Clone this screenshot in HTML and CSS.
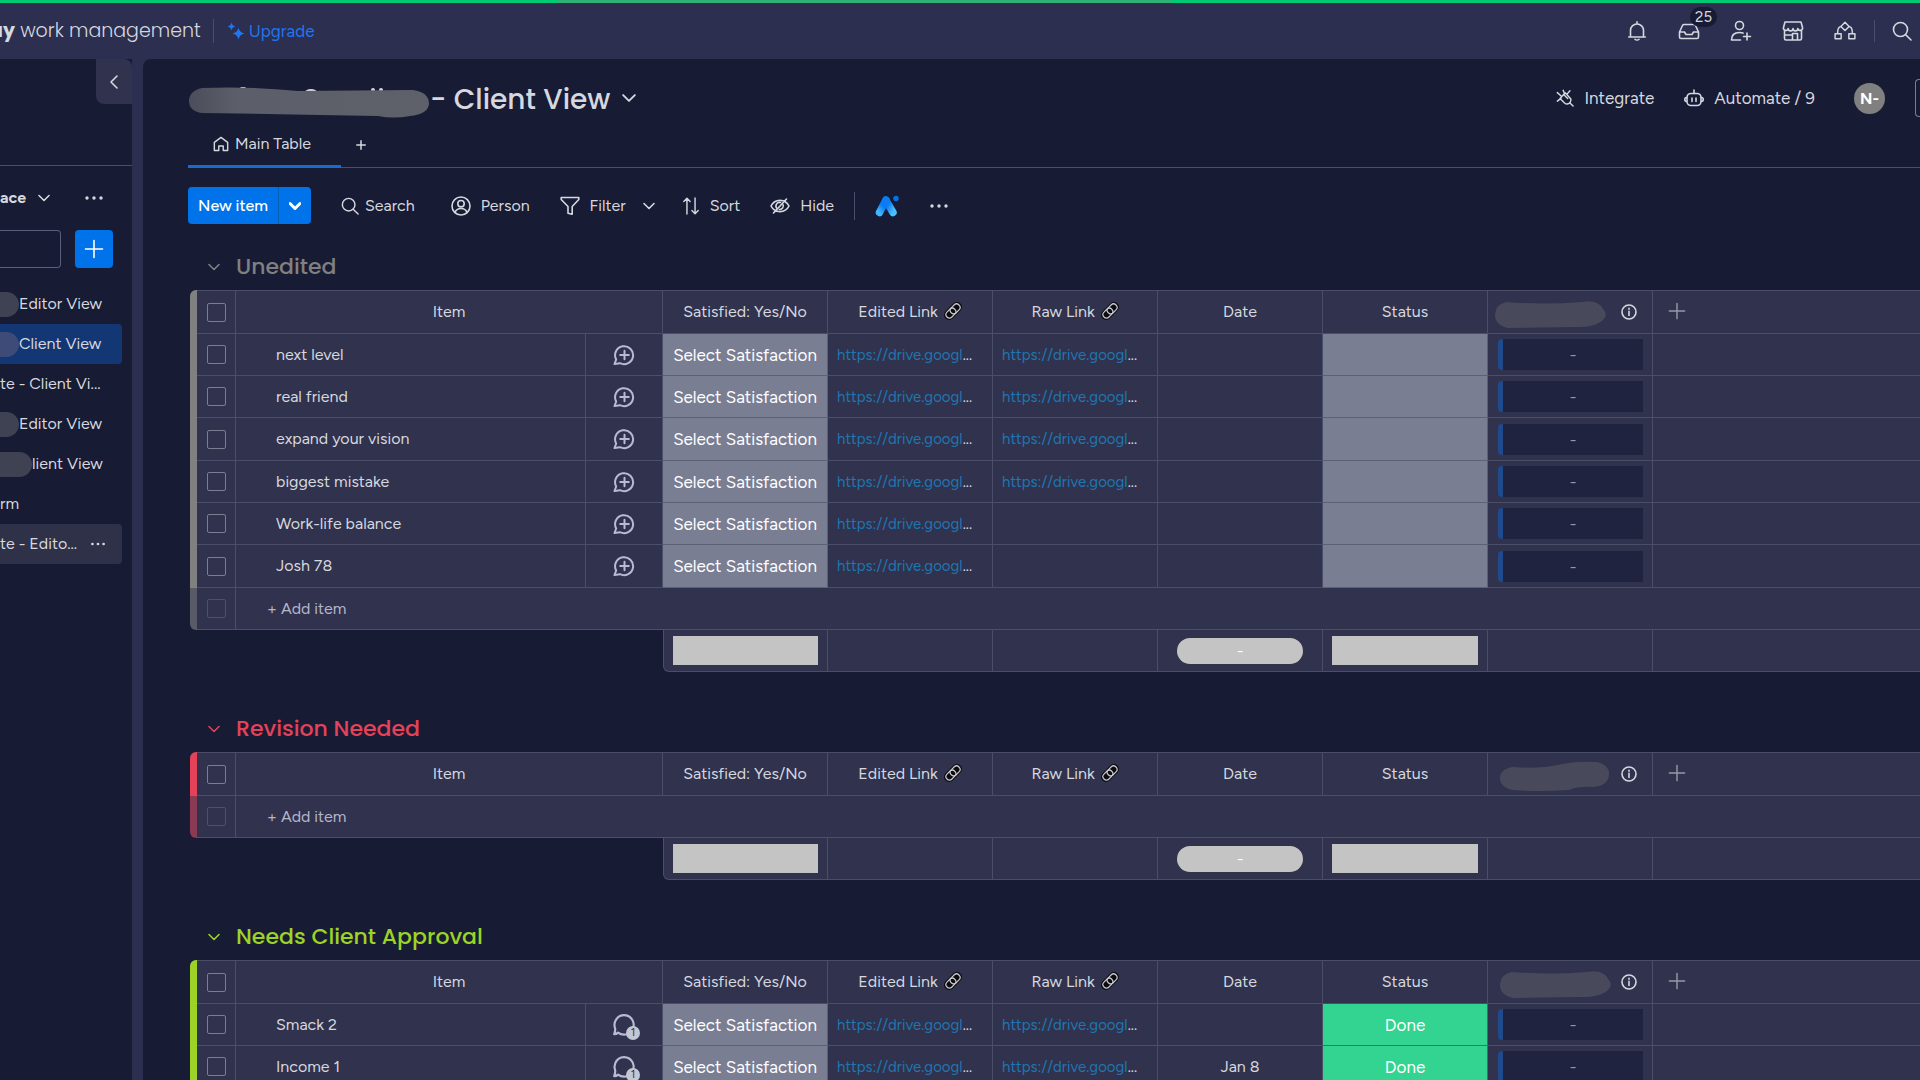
FILE: index.html
```html
<!DOCTYPE html>
<html lang="en">
  <head>
    <meta charset="UTF-8" />
    <meta name="viewport" content="width=device-width, initial-scale=1.0" />
    <title>Client View</title>
    <link rel="stylesheet" href="styles.css">
  </head>
  <body>
    <!-- icon sprite -->
    <svg class="sprite" aria-hidden="true">
      <defs>
        <linearGradient id="aiLeft" x1="0" y1="1" x2="0.6" y2="0">
          <stop offset="0" stop-color="#3fb6ff" />
          <stop offset="0.6" stop-color="#0a7cf5" />
        </linearGradient>
        <linearGradient id="aiRight" x1="1" y1="1" x2="0" y2="0">
          <stop offset="0" stop-color="#4cc0ff" />
          <stop offset="0.8" stop-color="#0073ea" />
        </linearGradient>
        <linearGradient id="smudge" x1="0" y1="0" x2="1" y2="0">
          <stop offset="0" stop-color="#4b4d5a" />
          <stop offset="0.2" stop-color="#5c5e69" />
          <stop offset="1" stop-color="#5e606a" />
        </linearGradient>
      </defs>
      <symbol id="chevron" viewBox="0 0 12 12"><path d="M1 3.5l5 5 5-5" /></symbol>
      <symbol id="chevron-left" viewBox="0 0 12 16"><path d="M9 2L3 8l6 6" /></symbol>
      <symbol id="plus" viewBox="0 0 20 20"><path d="M10 1.500v17M1.500 10h17" /></symbol>
      <symbol id="dots" viewBox="0 0 20 20"><g fill="currentColor" stroke="none"><circle cx="3" cy="10" r="1.700" /><circle cx="10" cy="10" r="1.700" /><circle cx="17" cy="10" r="1.700" /></g></symbol>
      <symbol id="search" viewBox="0 0 20 20"><circle cx="8.500" cy="8.500" r="7" /><path d="M13.500 13.500L19 19" /></symbol>
      <symbol id="home" viewBox="0 0 18 18"><path d="M1.500 16.300V7.200L9 1.600l7.500 5.600v9.100h-5v-5h-5v5z" /></symbol>
      <symbol id="person" viewBox="0 0 20 20"><circle cx="10" cy="10" r="9" /><circle cx="10" cy="7.700" r="3.200" /><path d="M4 16.500c1-3 3.500-4 6-4s5 1 6 4" /></symbol>
      <symbol id="filter" viewBox="0 0 20 20"><path d="M1.200 1.500h17.600v2L12.200 10.500v7.800L8 17.200V10.500L1.200 3.500z" /></symbol>
      <symbol id="sort" viewBox="0 0 18 20"><path d="M4.500 19V1.500M1 5l3.500-3.500L8 5M13.500 1v17.500M10 15l3.500 3.500L17 15" /></symbol>
      <symbol id="hide" viewBox="0 0 20 18"><path d="M1 9c2-4 5.500-5.600 9-5.600S17 5 19 9c-2 4-5.500 5.600-9 5.600S3 13 1 9zM3.500 16L16.500 2" /><path d="M7 11.500a3.600 3.600 0 0 1 3.500-6M13 7.500a3.600 3.600 0 0 1-3.600 5" /></symbol>
      <symbol id="ai" viewBox="0 0 24 22"><path d="M11 5.500l7 12" stroke="url(#aiRight)" stroke-width="7.500" /><path d="M11 5l-6.500 12.500" stroke="url(#aiLeft)" stroke-width="7.500" /><circle cx="21" cy="3.500" r="2.700" fill="#0073ea" stroke="none" /></symbol>
      <symbol id="bell" viewBox="0 0 22 22"><path d="M4.500 16.500V10.500a6.500 6.500 0 0 1 13 0v6M2.700 17h16.600M9 19.300c1 1 3 1 4 0M11 4V1.800" /></symbol>
      <symbol id="inbox" viewBox="0 0 22 22"><path d="M1.500 12L4.500 5.500q.5-1 1.500-1h10q1 0 1.500 1L20.500 12v5q0 1.500-1.500 1.500H3q-1.500 0-1.500-1.500zM1.500 12h5l1.500 2.500h6L15.500 12h5" /></symbol>
      <symbol id="invite" viewBox="0 0 22 22"><circle cx="9.500" cy="5.500" r="4" /><path d="M10.500 20H1.500c0-5 3-7.500 8-7.500 1.500 0 2.500.2 3.500.6M17 13v7M13.500 16.500h7" /></symbol>
      <symbol id="store" viewBox="0 0 22 22"><path d="M2.500 10.500v8q0 1.500 1.500 1.500h14q1.500 0 1.500-1.500v-8M3 2h16l1.500 5.500a2.400 2.400 0 0 1-4.700 1 2.400 2.400 0 0 1-4.800 0 2.400 2.400 0 0 1-4.800 0 2.400 2.400 0 0 1-4.700-1zM3 15h7.500M10.500 20v-6.500h5V20" /></symbol>
      <symbol id="flow" viewBox="0 0 24 22"><path d="M12 1.500l4.500 4.500-4.500 4.500L7.500 6zM7.500 6Q4 6.500 4 13M16.500 6Q20 6.500 20 13M1.200 14h6.600v5.500H1.200zM16.200 14h6.600v5.500h-6.600z" /></symbol>
      <symbol id="sparkles" viewBox="0 0 18 18"><g fill="currentColor" stroke="none"><path d="M4.500 0.500Q5.200 4 8.500 4.600 5.200 5.300 4.500 8.500 3.800 5.300.5 4.600 3.800 4 4.500.5z" /><path d="M11.500 5.500Q12.500 10.600 17.500 11.500 12.500 12.500 11.500 17.500 10.500 12.500 5.500 11.500 10.500 10.600 11.500 5.500z" /></g></symbol>
      <symbol id="plug" viewBox="0 0 20 20"><path d="M10.500 4.500L16.500 11Q17 14 14.500 16 12 17.500 9.500 15.500L4.500 10.500M8.500 6L13 10.500M8.500 6L4.500 10.500M1.500 13.500L5.500 10.500M10.500 4.500L8.500 6M12 6L15.500 2M9.500 5L8 1.500M6 8L1.500 4M15.500 15.500L19 19" /></symbol>
      <symbol id="robot" viewBox="0 0 20 18"><rect x="3" y="4.500" width="14" height="12" rx="4" /><path d="M10 4.500V1M8 9v3.500M12 9v3.500M2.500 8.500Q.8 8.500.8 10.500t1.700 2M17.500 8.500q1.700 0 1.700 2t-1.700 2" /></symbol>
      <symbol id="info" viewBox="0 0 16 16"><circle cx="8" cy="8" r="7" /><path d="M8 7.200v4.300M8 4.200v1" /></symbol>
      <symbol id="links" viewBox="0 0 18 18"><g transform="rotate(-45 9 9)"><rect x="-1" y="4.500" width="20" height="9" rx="4.500" fill="#0b0b10" stroke="#0b0b10" stroke-width="1" /><rect x="0.500" y="5.500" width="11" height="7" rx="3.500" stroke="#c9c9cf" stroke-width="1.200" /><rect x="6.500" y="5.500" width="11" height="7" rx="3.500" stroke="#c9c9cf" stroke-width="1.200" /></g></symbol>
      <symbol id="chat-add" viewBox="0 0 22 22"><path d="M1.500 20L3.200 15.500A9 9 0 1 1 7 19.200Z M11.500 6.700v8.600M7.200 11h8.600" /></symbol>
      <symbol id="chat" viewBox="0 0 22 22"><path d="M14 19.500q-5 1.200-8.500-1.500Q4 19.500 2 19.500 3 17 3 14.500 1.500 11 3 7.500 5.500 2 11 2t8 5q1.500 3 .5 6" /></symbol>
      <symbol id="blob" viewBox="0 0 112 30"><path d="M12 3Q50 6 88 3 104 0 109 10 115 16 108 22 100 28 84 28L14 29Q1 26 1 16 1 6 12 3z" fill="#484a5b" stroke="none" /></symbol>
      <symbol id="blob-step" viewBox="0 0 112 30"><path d="M14 6Q40 8 58 4 76 0 98 1 111 4 110 14 109 25 94 26 80 25 70 29 40 31 14 29 1 26 1 17T14 6z" fill="#484a5b" stroke="none" /></symbol>
    </svg>

    <div class="trial-bar"></div>
    <header class="topbar">
      <div class="brand"><b>ay</b> work management</div>
      <a class="upgrade" href="#"><svg class="i18"><use href="#sparkles" /></svg>Upgrade</a>
      <nav class="topbar-icons">
        <button type="button" aria-label="Notifications"><svg class="i22"><use href="#bell" /></svg></button>
        <button type="button" aria-label="Inbox"><svg class="i22"><use href="#inbox" /></svg><span class="count">25</span></button>
        <button type="button" aria-label="Invite"><svg class="i22"><use href="#invite" /></svg></button>
        <button type="button" aria-label="Apps"><svg class="i22"><use href="#store" /></svg></button>
        <button type="button" aria-label="Workflows"><svg class="i22"><use href="#flow" /></svg></button>
      </nav>
      <button type="button" class="topbar-search" aria-label="Search everything"><svg class="i20"><use href="#search" /></svg></button>
    </header>

    <div class="workspace">
      <aside class="sidebar">
        <div class="sidebar-top">
          <button type="button" class="collapse" aria-label="Collapse"><svg class="i16"><use href="#chevron-left" /></svg></button>
        </div>
        <div class="space-row">
          <button type="button" class="space-name">ace <svg class="i12"><use href="#chevron" /></svg></button>
          <button type="button" aria-label="More"><svg class="i20"><use href="#dots" /></svg></button>
        </div>
        <div class="space-search">
          <input type="text" aria-label="Search boards" />
          <button type="button" class="add-board" aria-label="Add"><svg class="i20"><use href="#plus" /></svg></button>
        </div>
        <ul class="boards">
          <li><a href="#"><span class="mask"></span>Editor View</a></li>
          <li class="active"><a href="#"><span class="mask mask-blue"></span>Client View</a></li>
          <li><a href="#">te - Client Vi...</a></li>
          <li><a href="#"><span class="mask"></span>Editor View</a></li>
          <li><a href="#"><span class="mask mask-long"></span>lient View</a></li>
          <li><a href="#">rm</a></li>
          <li class="hover"><a href="#">te - Edito...</a><svg class="i16"><use href="#dots" /></svg></li>
        </ul>
      </aside>

      <main class="board">
        <div class="board-head">
          <svg class="title-mask" viewBox="0 0 242 34">
            <g fill="#d5d8df"><ellipse cx="55" cy="3" rx="3" ry="1" /><ellipse cx="123" cy="7" rx="6" ry="3" /><circle cx="185" cy="5" r="2" /><circle cx="193" cy="5" r="2" /></g>
            <path d="M14 3Q60 1 110 6L225 5Q241 7 241 19 240 29 222 31 205 34 190 31 130 30 80 29L14 28Q1 26 1 16T14 3z" fill="url(#smudge)" />
          </svg>
          <h1>- Client View</h1>
          <button type="button" class="title-menu" aria-label="Board menu"><svg class="i14"><use href="#chevron" /></svg></button>
          <div class="board-actions">
            <button type="button"><svg class="i18"><use href="#plug" /></svg>Integrate</button>
            <button type="button"><svg class="i20"><use href="#robot" /></svg>Automate / 9</button>
            <span class="avatar">N-</span>
            <button type="button" class="invite-btn" aria-label="Invite to board"></button>
          </div>
        </div>

        <div class="tabs">
          <a class="tab" href="#"><svg class="i16"><use href="#home" /></svg>Main Table</a>
          <button type="button" aria-label="Add view"><svg class="i10"><use href="#plus" /></svg></button>
        </div>

        <div class="toolbar">
          <div class="new-item">
            <button type="button">New item</button>
            <button type="button" aria-label="More item types"><svg class="i12"><use href="#chevron" /></svg></button>
          </div>
          <button type="button" class="tool-search"><svg class="i18"><use href="#search" /></svg>Search</button>
          <button type="button"><svg class="i20"><use href="#person" /></svg>Person</button>
          <button type="button" class="tool-filter"><svg class="i20"><use href="#filter" /></svg>Filter</button>
          <button type="button" class="tool-arrow" aria-label="Filter options"><svg class="i12"><use href="#chevron" /></svg></button>
          <button type="button"><svg class="i18"><use href="#sort" /></svg>Sort</button>
          <button type="button"><svg class="i20"><use href="#hide" /></svg>Hide</button>
          <span class="rule"></span>
          <button type="button" aria-label="AI"><svg class="i24"><use href="#ai" /></svg></button>
          <button type="button" aria-label="More"><svg class="i20"><use href="#dots" /></svg></button>
        </div>

        <section class="group gray">
          <h2><svg class="i12"><use href="#chevron" /></svg>Unedited</h2>
          <table>
            <colgroup><col class="c-bar"><col class="c-check"><col class="c-name"><col class="c-chat"><col class="c-data" span="6"><col></colgroup>
            <thead>
              <tr>
                <th class="bar"></th>
                <th><input type="checkbox" aria-label="Select all" /></th>
                <th colspan="2">Item</th>
                <th>Satisfied: Yes/No</th>
                <th>Edited Link <svg class="i18"><use href="#links" /></svg></th>
                <th>Raw Link <svg class="i18"><use href="#links" /></svg></th>
                <th>Date</th>
                <th>Status</th>
                <th><div class="masked-head"><svg class="blob"><use href="#blob" /></svg><svg class="i16"><use href="#info" /></svg></div></th>
                <th class="add-col"><svg class="i18"><use href="#plus" /></svg></th>
              </tr>
            </thead>
            <tbody>
              <tr>
                <td class="bar"></td><td><input type="checkbox" aria-label="next level" /></td><td class="name">next level</td>
                <td class="chat"><svg class="i22"><use href="#chat-add" /></svg></td><td class="pick">Select Satisfaction</td>
                <td class="link"><a href="#">https://drive.googl</a>...</td><td class="link"><a href="#">https://drive.googl</a>...</td>
                <td></td><td class="pick"></td><td><div class="timeline">-</div></td><td class="last"></td>
              </tr>
              <tr>
                <td class="bar"></td><td><input type="checkbox" aria-label="real friend" /></td><td class="name">real friend</td>
                <td class="chat"><svg class="i22"><use href="#chat-add" /></svg></td><td class="pick">Select Satisfaction</td>
                <td class="link"><a href="#">https://drive.googl</a>...</td><td class="link"><a href="#">https://drive.googl</a>...</td>
                <td></td><td class="pick"></td><td><div class="timeline">-</div></td><td class="last"></td>
              </tr>
              <tr>
                <td class="bar"></td><td><input type="checkbox" aria-label="expand your vision" /></td><td class="name">expand your vision</td>
                <td class="chat"><svg class="i22"><use href="#chat-add" /></svg></td><td class="pick">Select Satisfaction</td>
                <td class="link"><a href="#">https://drive.googl</a>...</td><td class="link"><a href="#">https://drive.googl</a>...</td>
                <td></td><td class="pick"></td><td><div class="timeline">-</div></td><td class="last"></td>
              </tr>
              <tr>
                <td class="bar"></td><td><input type="checkbox" aria-label="biggest mistake" /></td><td class="name">biggest mistake</td>
                <td class="chat"><svg class="i22"><use href="#chat-add" /></svg></td><td class="pick">Select Satisfaction</td>
                <td class="link"><a href="#">https://drive.googl</a>...</td><td class="link"><a href="#">https://drive.googl</a>...</td>
                <td></td><td class="pick"></td><td><div class="timeline">-</div></td><td class="last"></td>
              </tr>
              <tr>
                <td class="bar"></td><td><input type="checkbox" aria-label="Work-life balance" /></td><td class="name">Work-life balance</td>
                <td class="chat"><svg class="i22"><use href="#chat-add" /></svg></td><td class="pick">Select Satisfaction</td>
                <td class="link"><a href="#">https://drive.googl</a>...</td><td></td>
                <td></td><td class="pick"></td><td><div class="timeline">-</div></td><td class="last"></td>
              </tr>
              <tr>
                <td class="bar"></td><td><input type="checkbox" aria-label="Josh 78" /></td><td class="name">Josh 78</td>
                <td class="chat"><svg class="i22"><use href="#chat-add" /></svg></td><td class="pick">Select Satisfaction</td>
                <td class="link"><a href="#">https://drive.googl</a>...</td><td></td>
                <td></td><td class="pick"></td><td><div class="timeline">-</div></td><td class="last"></td>
              </tr>
              <tr class="add-row">
                <td class="bar"></td><td><input type="checkbox" aria-label="New item" disabled /></td>
                <td colspan="9" class="add-item">+ Add item</td>
              </tr>
            </tbody>
            <tfoot>
              <tr>
                <td colspan="4" class="void"></td><td class="first"><div class="sum"></div></td><td></td><td></td>
                <td><div class="sum sum-date">-</div></td><td><div class="sum"></div></td><td></td><td class="last"></td>
              </tr>
            </tfoot>
          </table>
        </section>

        <section class="group red">
          <h2><svg class="i12"><use href="#chevron" /></svg>Revision Needed</h2>
          <table>
            <colgroup><col class="c-bar"><col class="c-check"><col class="c-name"><col class="c-chat"><col class="c-data" span="6"><col></colgroup>
            <thead>
              <tr>
                <th class="bar"></th>
                <th><input type="checkbox" aria-label="Select all" /></th>
                <th colspan="2">Item</th>
                <th>Satisfied: Yes/No</th>
                <th>Edited Link <svg class="i18"><use href="#links" /></svg></th>
                <th>Raw Link <svg class="i18"><use href="#links" /></svg></th>
                <th>Date</th>
                <th>Status</th>
                <th><div class="masked-head"><svg class="blob"><use href="#blob-step" /></svg><svg class="i16"><use href="#info" /></svg></div></th>
                <th class="add-col"><svg class="i18"><use href="#plus" /></svg></th>
              </tr>
            </thead>
            <tbody>
              <tr class="add-row">
                <td class="bar"></td><td><input type="checkbox" aria-label="New item" disabled /></td>
                <td colspan="9" class="add-item">+ Add item</td>
              </tr>
            </tbody>
            <tfoot>
              <tr>
                <td colspan="4" class="void"></td><td class="first"><div class="sum"></div></td><td></td><td></td>
                <td><div class="sum sum-date">-</div></td><td><div class="sum"></div></td><td></td><td class="last"></td>
              </tr>
            </tfoot>
          </table>
        </section>

        <section class="group green">
          <h2><svg class="i12"><use href="#chevron" /></svg>Needs Client Approval</h2>
          <table>
            <colgroup><col class="c-bar"><col class="c-check"><col class="c-name"><col class="c-chat"><col class="c-data" span="6"><col></colgroup>
            <thead>
              <tr>
                <th class="bar"></th>
                <th><input type="checkbox" aria-label="Select all" /></th>
                <th colspan="2">Item</th>
                <th>Satisfied: Yes/No</th>
                <th>Edited Link <svg class="i18"><use href="#links" /></svg></th>
                <th>Raw Link <svg class="i18"><use href="#links" /></svg></th>
                <th>Date</th>
                <th>Status</th>
                <th><div class="masked-head"><svg class="blob"><use href="#blob" /></svg><svg class="i16"><use href="#info" /></svg></div></th>
                <th class="add-col"><svg class="i18"><use href="#plus" /></svg></th>
              </tr>
            </thead>
            <tbody>
              <tr>
                <td class="bar"></td><td><input type="checkbox" aria-label="Smack 2" /></td><td class="name">Smack 2</td>
                <td class="chat"><div class="replies"><svg class="i24"><use href="#chat" /></svg><span>1</span></div></td><td class="pick">Select Satisfaction</td>
                <td class="link"><a href="#">https://drive.googl</a>...</td><td class="link"><a href="#">https://drive.googl</a>...</td>
                <td></td><td class="pick done">Done</td><td><div class="timeline">-</div></td><td class="last"></td>
              </tr>
              <tr>
                <td class="bar"></td><td><input type="checkbox" aria-label="Income 1" /></td><td class="name">Income 1</td>
                <td class="chat"><div class="replies"><svg class="i24"><use href="#chat" /></svg><span>1</span></div></td><td class="pick">Select Satisfaction</td>
                <td class="link"><a href="#">https://drive.googl</a>...</td><td class="link"><a href="#">https://drive.googl</a>...</td>
                <td>Jan 8</td><td class="pick done">Done</td><td><div class="timeline">-</div></td><td class="last"></td>
              </tr>
            </tbody>
          </table>
        </section>
      </main>
    </div>
  </body>
</html>
```
FILE: styles.css
```css
* {
  box-sizing: border-box;
}

:root {
  --bg: #181b34;
  --frame: #2c2f4f;
  --cell: #30324e;
  --line: #4b4e69;
  --text: #d5d8df;
  --blue: #0073ea;
  --title-font: Poppins, Inter, sans-serif;
}

body {
  display: flex;
  flex-direction: column;
  height: 100vh;
  margin: 0;
  overflow: hidden;
  background-color: var(--frame);
  color: var(--text);
  font: 16px/24px Figtree, Lato, sans-serif;
}

a {
  color: inherit;
  text-decoration: none;
}

button {
  display: flex;
  align-items: center;
  padding: 0;
  border: none;
  background: none;
  color: inherit;
  font: inherit;
  cursor: pointer;
}

/* icons */
svg {
  flex: none;
  fill: none;
  stroke: currentColor;
  stroke-width: 1.6;
  stroke-linecap: round;
  stroke-linejoin: round;
}

.sprite {
  position: absolute;
  width: 0;
  height: 0;
}

.i10 { width: 10px; height: 10px; stroke-width: 3; }
.i12 { width: 12px; height: 12px; }
.i14 { width: 14px; height: 14px; }
.i16 { width: 16px; height: 16px; }
.i18 { width: 18px; height: 18px; }
.i20 { width: 20px; height: 20px; }
.i22 { width: 22px; height: 22px; }
.i24 { width: 24px; height: 24px; }

/* top bar */
.trial-bar {
  flex: none;
  height: 3px;
  background: linear-gradient(90deg, #00ca72 29%, #2fb374 29%, #2fb374 61%, #00ca72 61%);
}

.topbar {
  display: flex;
  flex: none;
  align-items: center;
  height: 56px;
  padding-right: 8px;
}

.brand {
  margin-left: -10px;
  padding-right: 12px;
  border-right: 1px solid var(--line);
  font: 300 19px/24px var(--title-font);
}

.brand b {
  font-weight: 700;
}

.upgrade {
  display: flex;
  align-items: center;
  gap: 4px;
  margin-left: 13px;
  color: #1f76f0;
  font-size: 17px;
}

.topbar-icons {
  display: flex;
  gap: 30px;
  margin-left: auto;
  padding-right: 18px;
  border-right: 1px solid var(--line);
}

.topbar-icons button {
  position: relative;
}

.count {
  position: absolute;
  top: -13px;
  left: 12px;
  padding: 0 5px;
  border-radius: 10px;
  background-color: var(--bg);
  font-size: 15px;
  line-height: 20px;
}

.topbar-search {
  margin-left: 17px;
}

/* sidebar */
.workspace {
  display: flex;
  flex: 1;
  gap: 11px;
  min-height: 0;
}

.sidebar {
  flex: none;
  width: 132px;
  background-color: var(--bg);
}

.sidebar-top {
  height: 107px;
  border-bottom: 1px solid var(--line);
}

.collapse {
  justify-content: center;
  width: 36px;
  height: 45px;
  margin-left: auto;
  border-radius: 0 8px 0 8px;
  background-color: var(--cell);
}

.space-row {
  display: flex;
  align-items: center;
  justify-content: space-between;
  height: 64px;
  padding-right: 28px;
}

.space-name {
  gap: 12px;
  font-weight: 700;
}

.space-search {
  display: flex;
  gap: 14px;
}

.space-search input {
  width: 61px;
  height: 38px;
  border: 1px solid #5b5e7b;
  border-left: none;
  border-radius: 0 4px 4px 0;
  background: none;
  color: inherit;
}

.add-board {
  justify-content: center;
  width: 38px;
  height: 38px;
  border-radius: 4px;
  background-color: var(--blue);
  color: #fff;
}

.boards {
  margin: 16px 10px 0 0;
  padding: 0;
  list-style: none;
}

.boards li {
  display: flex;
  align-items: center;
  justify-content: space-between;
  height: 40px;
  padding-right: 16px;
  border-radius: 0 4px 4px 0;
}

.boards a {
  display: flex;
  align-items: center;
  white-space: nowrap;
}

.boards .active {
  background-color: #133774;
}

.boards .hover {
  background-color: #2f3148;
}

.mask {
  width: 19px;
  height: 25px;
  border-radius: 0 14px 14px 0;
  background-color: #3f4253;
}

.mask-blue {
  background-color: #3e4a78;
}

.mask-long {
  width: 32px;
}

/* board header */
.board {
  flex: 1;
  min-width: 0;
  padding: 15px 0 0 45px;
  border-top-left-radius: 8px;
  background-color: var(--bg);
}

.board-head {
  display: flex;
  align-items: center;
  height: 48px;
}

.title-mask {
  width: 242px;
  height: 34px;
  margin-top: 8px;
  stroke: none;
}

h1 {
  margin: 4px 0 0;
  font: 500 28px/36px var(--title-font);
}

.title-menu {
  margin-left: 12px;
}

.board-actions {
  display: flex;
  align-items: center;
  margin-left: auto;
  font-size: 17px;
}

.board-actions button {
  gap: 10px;
  margin-right: 30px;
}

.avatar {
  width: 31px;
  margin: 0 30px 0 9px;
  border-radius: 50%;
  background-color: #808080;
  color: #fff;
  font-size: 16px;
  font-weight: 700;
  line-height: 31px;
  text-align: center;
}

.board-actions .invite-btn {
  width: 5px;
  height: 38px;
  margin: 0;
  border: 1px solid #797e93;
  border-right: none;
  border-radius: 4px 0 0 4px;
}

.tabs {
  display: flex;
  height: 46px;
  border-bottom: 1px solid var(--line);
}

.tab {
  display: flex;
  align-items: center;
  gap: 6px;
  margin-bottom: -1px;
  padding: 0 30px 0 25px;
  border-bottom: 3px solid #1a6bd0;
}

.tabs button {
  margin-left: 15px;
}

.toolbar {
  display: flex;
  align-items: center;
  gap: 30px;
  height: 37px;
  margin: 19px 0 18px;
}

.toolbar button {
  gap: 10px;
}

.toolbar .tool-search {
  gap: 6px;
  margin-right: 6px;
}

.new-item {
  display: flex;
  border-radius: 4px;
  background-color: var(--blue);
  color: #fff;
  font-weight: 500;
}

.new-item button {
  height: 37px;
  padding: 0 10px;
}

.new-item button + button {
  border-left: 1px solid #0060b9;
}

.new-item svg {
  stroke-width: 3;
}

.toolbar .tool-filter {
  margin-right: -13px;
}

.tool-arrow {
  margin-right: -3px;
}

.rule {
  width: 1px;
  height: 28px;
  margin: 0 -10px;
  background-color: var(--line);
}

/* groups */
.group {
  margin: 0 0 32px 2px;
}

.gray { --group: #808080; --fade: #585a66; }
.red { --group: #e44258; --fade: #8b3a54; }
.green { --group: #9cd326; --fade: #66823c; }

h2 {
  display: flex;
  align-items: center;
  gap: 16px;
  height: 48px;
  margin: 0;
  padding: 2px 0 0 18px;
  color: var(--group);
  font: 500 22px/28px var(--title-font);
}

table {
  width: 100%;
  border-spacing: 0;
  table-layout: fixed;
}

.c-bar { width: 7px; }
.c-check { width: 39px; }
.c-name { width: 350px; }
.c-chat { width: 77px; }
.c-data { width: 165px; }

th,
td {
  height: 42px;
  padding: 0;
  border-right: 1px solid var(--line);
  border-bottom: 1px solid var(--line);
  background-color: var(--cell);
  font-weight: 400;
  text-align: center;
  white-space: nowrap;
}

th {
  height: 44px;
  border-top: 1px solid var(--line);
}

tbody tr:nth-child(3n) td {
  height: 43px;
}

th > svg {
  margin-left: 2px;
  vertical-align: -3px;
}

.bar {
  border: none;
  background-color: var(--group);
}

th.bar {
  border-top-left-radius: 6px;
}

.add-row .bar {
  border-bottom-left-radius: 6px;
  background-color: var(--fade);
}

input[type="checkbox"] {
  display: block;
  width: 19px;
  height: 19px;
  margin: 0 auto;
  border: 1px solid #797e93;
  border-radius: 2px;
  appearance: none;
}

input[type="checkbox"]:disabled {
  opacity: 0.4;
}

.name {
  padding-left: 40px;
  text-align: left;
}

.chat svg {
  display: block;
  margin: 0 auto;
  color: #b9bbd3;
  stroke-width: 2;
}

.replies {
  position: relative;
  width: 24px;
  margin: 0 auto;
}

.replies span {
  position: absolute;
  right: -4px;
  bottom: -3px;
  width: 14px;
  border-radius: 50%;
  background-color: #c3c6d4;
  color: var(--cell);
  font-size: 11px;
  line-height: 14px;
}

.pick {
  border-color: #5d6079;
  background-color: #797e93;
  color: #fff;
  font-size: 17px;
}

.done {
  background-color: #33d391;
}

.link {
  padding-left: 9px;
  font-size: 15px;
  text-align: left;
}

.link a {
  color: #1f76b0;
}

.masked-head {
  display: flex;
  align-items: center;
  justify-content: flex-end;
  gap: 15px;
  padding-right: 15px;
}

.group + .group .masked-head {
  gap: 10px;
}

.blob {
  width: 112px;
  height: 30px;
  margin-top: 4px;
}

.timeline {
  height: 31px;
  margin: 0 9px 0 10px;
  border-left: 5px solid #1f4a8c;
  border-radius: 4px 0 0 4px;
  background-color: #202340;
  color: #9699a6;
  line-height: 31px;
}

.add-col {
  padding-left: 13px;
  color: #9699a6;
  text-align: left;
}

.add-col,
.last {
  border-right: none;
}

.add-item {
  padding-left: 31px;
  border-right: none;
  color: #b4b6c8;
  text-align: left;
}

.void {
  border: none;
  background: none;
}

.first {
  border-left: 1px solid var(--line);
  border-bottom-left-radius: 6px;
}

.sum {
  height: 29px;
  margin: 0 9px;
  background-color: #c4c4c4;
}

.sum-date {
  height: 26px;
  margin: 0 19px;
  border-radius: 13px;
  color: #fff;
  line-height: 26px;
}
```
